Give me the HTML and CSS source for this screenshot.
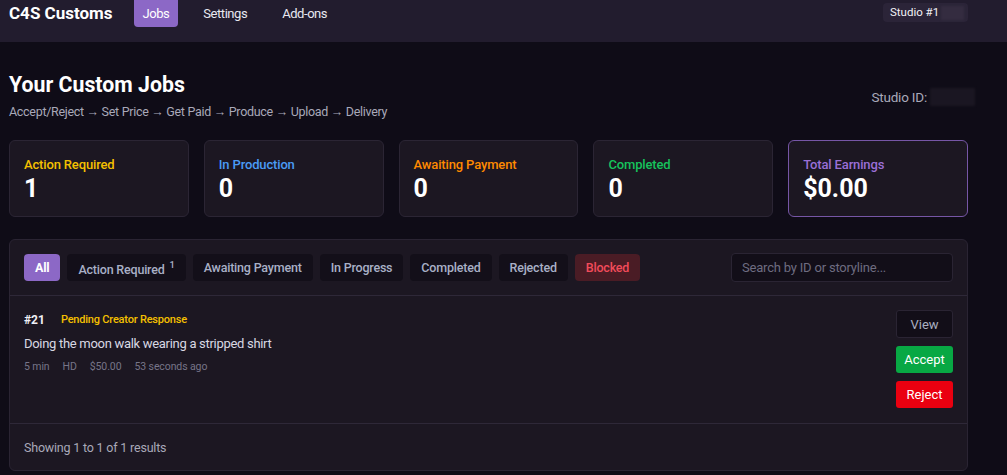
FILE: index.html
```html
<!DOCTYPE html>
<html lang="en">
<head>
<meta charset="utf-8">
<title>C4S Customs - Jobs</title>
<link rel="stylesheet" href="styles.css">
</head>
<body>
<header class="topbar">
  <div class="brand">C4S Customs</div>
  <nav class="nav">
    <a class="nav-link active">Jobs</a>
    <a class="nav-link">Settings</a>
    <a class="nav-link">Add-ons</a>
  </nav>
  <div class="studio-pill">Studio #1<span class="blur blur-pill"></span></div>
</header>

<main class="page">
  <section class="page-head">
    <div>
      <h1 class="title">Your Custom Jobs</h1>
      <p class="subtitle">Accept/Reject → Set Price → Get Paid → Produce → Upload → Delivery</p>
    </div>
    <div class="studio-id">Studio ID: <span class="blur blur-id"></span></div>
  </section>

  <section class="stats">
    <div class="stat">
      <div class="stat-label yellow">Action Required</div>
      <div class="stat-value">1</div>
    </div>
    <div class="stat">
      <div class="stat-label blue">In Production</div>
      <div class="stat-value">0</div>
    </div>
    <div class="stat">
      <div class="stat-label orange">Awaiting Payment</div>
      <div class="stat-value">0</div>
    </div>
    <div class="stat">
      <div class="stat-label green">Completed</div>
      <div class="stat-value">0</div>
    </div>
    <div class="stat stat-accent">
      <div class="stat-label purple">Total Earnings</div>
      <div class="stat-value">$0.00</div>
    </div>
  </section>

  <section class="panel">
    <div class="toolbar">
      <div class="filters">
        <button class="filter active">All</button>
        <button class="filter">Action Required <sup class="count">1</sup></button>
        <button class="filter">Awaiting Payment</button>
        <button class="filter">In Progress</button>
        <button class="filter">Completed</button>
        <button class="filter">Rejected</button>
        <button class="filter danger">Blocked</button>
      </div>
      <input class="search" type="text" placeholder="Search by ID or storyline...">
    </div>

    <div class="job">
      <div class="job-info">
        <div class="job-top">
          <span class="job-id">#21</span>
          <span class="job-status">Pending Creator Response</span>
        </div>
        <div class="job-desc">Doing the moon walk wearing a stripped shirt</div>
        <div class="job-meta">
          <span>5 min</span>
          <span>HD</span>
          <span>$50.00</span>
          <span>53 seconds ago</span>
        </div>
      </div>
      <div class="job-actions">
        <button class="btn btn-view">View</button>
        <button class="btn btn-accept">Accept</button>
        <button class="btn btn-reject">Reject</button>
      </div>
    </div>

    <div class="panel-foot">Showing 1 to 1 of 1 results</div>
  </section>
</main>
</body>
</html>
```

FILE: styles.css
```css
* { box-sizing: border-box; }

html, body {
  margin: 0;
  padding: 0;
  background: #0f0c17;
  color: #e6e6ee;
  font-family: Roboto, "Noto Sans", sans-serif;
  overflow: hidden;
}

.topbar {
  height: 42px;
  background: #221c2e;
  display: flex;
  align-items: flex-start;
  padding: 0 39px 0 9px;
}

.brand {
  font-size: 17px;
  font-weight: 700;
  color: #ffffff;
  line-height: 27px;
  white-space: nowrap;
}

.nav {
  display: flex;
  margin-left: 21px;
  gap: 15px;
}

.nav-link {
  font-size: 13px;
  letter-spacing: -0.45px;
  color: #e8e8f0;
  line-height: 27px;
  height: 27px;
  padding: 0 10px;
  border-radius: 0 0 4px 4px;
  white-space: nowrap;
}

.nav-link.active {
  background: #8c68c6;
  color: #ffffff;
  padding: 0 9px;
}

.studio-pill {
  margin-left: auto;
  margin-top: 3px;
  height: 19px;
  width: 85px;
  flex-shrink: 0;
  white-space: nowrap;
  background: #2b2438;
  border-radius: 4px;
  font-size: 11.5px;
  line-height: 19px;
  color: #f2f2f6;
  padding: 0 4px 0 7px;
  display: flex;
  align-items: center;
}

.blur {
  display: inline-block;
  background: #2f2838;
  filter: blur(1px);
}

.blur-pill {
  width: 26px;
  height: 14px;
  margin-left: 2px;
  background: #342c40;
}

.page {
  padding: 0 39px 0 9px;
}

.page-head {
  display: flex;
  justify-content: space-between;
  align-items: flex-start;
  padding-top: 30px;
  height: 98px;
}

.title {
  margin: 0;
  font-size: 21.3px;
  font-weight: 700;
  color: #ffffff;
  line-height: 26px;
}

.subtitle {
  margin: 5px 0 0;
  font-size: 12.5px;
  letter-spacing: -0.3px;
  color: #a9a9b9;
  line-height: 18px;
}

.studio-id {
  margin-top: 16px;
  font-size: 13.5px;
  letter-spacing: -0.2px;
  color: #a9a9b9;
  display: flex;
  align-items: center;
  gap: 3px;
  margin-right: -7px;
}

.blur-id {
  width: 45px;
  height: 18px;
  background: #1a1622;
}

.stats {
  display: grid;
  grid-template-columns: repeat(5, 1fr);
  gap: 15px;
}

.stat {
  height: 77px;
  background: #1c1722;
  border: 1px solid #2b2534;
  border-radius: 6px;
  padding: 15px 14px 0;
}

.stat-accent {
  border-color: #7656a6;
}

.stat-label {
  font-size: 13px;
  font-weight: 500;
  letter-spacing: -0.15px;
  line-height: 18px;
}

.stat-value {
  font-size: 25px;
  font-weight: 700;
  color: #ffffff;
  line-height: 29px;
}

.yellow { color: #f5c000; }
.blue { color: #4a9bf5; }
.orange { color: #ff8a00; }
.green { color: #16c25c; }
.purple { color: #9a6fd6; }

.panel {
  margin-top: 22px;
  background: #1c1722;
  border: 1px solid #2a2433;
  border-radius: 6px;
}

.toolbar {
  display: flex;
  align-items: center;
  justify-content: space-between;
  padding: 13px 14px 13px 14px;
  border-bottom: 1px solid #2e2838;
}

.filters {
  display: flex;
  gap: 7px;
}

.filter {
  font-family: inherit;
  height: 27px;
  padding: 0 11px;
  border: none;
  border-radius: 4px;
  background: #130f19;
  color: #a9b0c6;
  font-size: 12.5px;
  font-weight: 500;
  letter-spacing: -0.2px;
  cursor: pointer;
  white-space: nowrap;
}

.filter.active {
  background: #8c68c6;
  color: #ffffff;
  font-weight: 700;
  padding: 0 11px;
}

.filter.danger {
  background: #4a1c25;
  color: #f24b5a;
}

.count {
  font-size: 9.5px;
  vertical-align: 6px;
  margin-left: 2px;
}

.search {
  width: 222px;
  height: 29px;
  background: #120e18;
  border: 1px solid #2a2433;
  border-radius: 4px;
  color: #e6e6ee;
  font-family: inherit;
  font-size: 13px;
  letter-spacing: -0.2px;
  padding: 0 10px;
  outline: none;
}

.search::placeholder {
  color: #6e6c80;
}

.job {
  display: flex;
  justify-content: space-between;
  padding: 14px 14px 15px;
  border-bottom: 1px solid #2e2838;
}

.job-info {
  padding-top: 1px;
}

.job-top {
  display: flex;
  align-items: center;
  gap: 16px;
  line-height: 18px;
}

.job-id {
  font-size: 12px;
  font-weight: 700;
  color: #f0f0f6;
}

.job-status {
  font-size: 11px;
  font-weight: 500;
  letter-spacing: -0.2px;
  color: #f5c000;
}

.job-desc {
  margin-top: 6px;
  font-size: 13px;
  letter-spacing: -0.3px;
  color: #d8d8e2;
  line-height: 18px;
}

.job-meta {
  margin-top: 6px;
  display: flex;
  gap: 13px;
  font-size: 10.5px;
  letter-spacing: -0.1px;
  color: #777588;
  line-height: 16px;
}

.job-actions {
  display: flex;
  flex-direction: column;
  gap: 8px;
  width: 57px;
}

.btn {
  font-family: inherit;
  height: 28px;
  border-radius: 3px;
  border: none;
  font-size: 13px;
  color: #ffffff;
  padding: 0;
}

.btn-view {
  background: #120e18;
  border: 1px solid #2a2433;
  color: #aab0c0;
}

.btn-accept {
  background: #08a844;
  height: 27px;
}

.btn-reject {
  background: #ea0010;
  height: 27px;
}

.panel-foot {
  padding: 14px 14px 12px;
  font-size: 12.5px;
  letter-spacing: -0.2px;
  color: #a9a9b9;
  line-height: 20px;
}
```
